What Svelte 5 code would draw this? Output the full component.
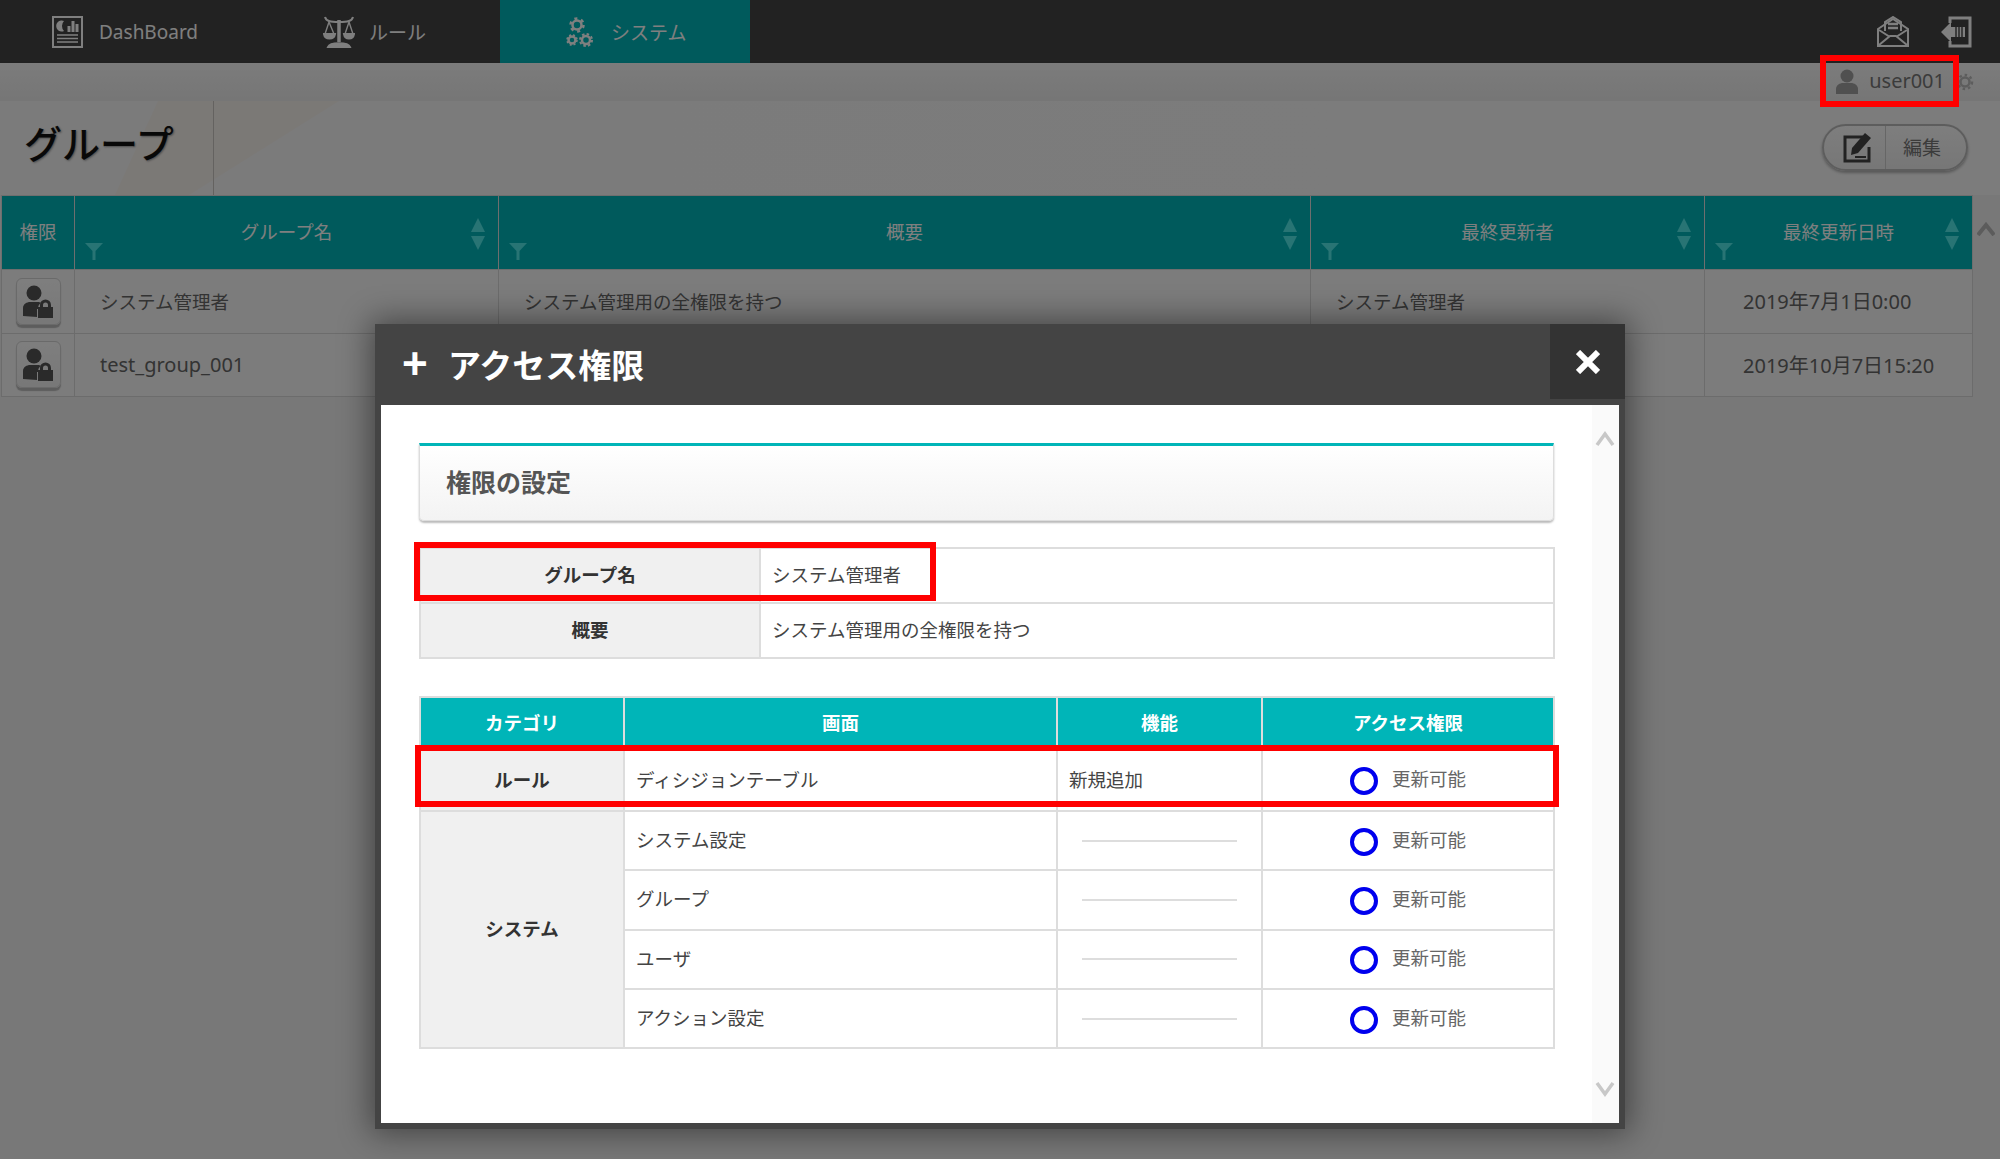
<script>
  const columns = [
    { name: "グループ名", width: 424 },
    { name: "概要", width: 812 },
    { name: "最終更新者", width: 394 },
    { name: "最終更新日時", width: 268 }
  ];

  const groups = [
    { name: "システム管理者", note: "システム管理用の全権限を持つ", user: "システム管理者", date: "2019年7月1日0:00" },
    { name: "test_group_001", note: "", user: "", date: "2019年10月7日15:20" }
  ];

  const screens = ["システム設定", "グループ", "ユーザ", "アクション設定"];
</script>

<div class="page">
  <nav class="topbar">
    <a class="tab" href="#dash">
      <svg width="31" height="32" viewBox="0 0 31 32" fill="none" stroke="currentColor" stroke-width="2">
        <rect x="1" y="1" width="29" height="30" />
        <path d="M12 5a5.5 5.5 0 1 0 0 10 7 7 0 0 1-2-5 7 7 0 0 1 2-5z" fill="currentColor" stroke="none" />
        <path d="M17 16v-6M21 16V5M25 16V8" stroke-width="3" />
        <path d="M5 19h21M5 22.5h21M5 26h21" stroke-width="1.6" />
      </svg>
      <span>DashBoard</span>
    </a>
    <a class="tab rule" href="#rule">
      <svg width="32" height="32" viewBox="0 0 32 32" fill="none" stroke="currentColor" stroke-width="2">
        <path d="M16 4v22" stroke-width="3.5" />
        <path d="M2 1c1 4 5 5 14 5s13-1 14-5" />
        <path d="M6 6 2 18h9zM26 6l-4 12h8z" stroke-width="1.4" />
        <path d="M1 18c1 6 10 6 11 0zM21 18c1 6 9 6 10 0z" fill="currentColor" />
        <path d="M5 31c2-5 20-5 22 0z" fill="currentColor" />
      </svg>
      <span>ルール</span>
    </a>
    <a class="tab active" href="#system">
      <svg width="28" height="30" viewBox="0 0 28 30" fill="none" stroke="currentColor">
        <circle cx="11" cy="8" r="4.5" stroke-width="2.5" />
        <circle cx="11" cy="8" r="6.5" stroke-width="2.5" stroke-dasharray="3 3.8" />
        <circle cx="6" cy="23" r="3.5" stroke-width="2.5" />
        <circle cx="6" cy="23" r="5" stroke-width="1.5" stroke-dasharray="2 2" />
        <circle cx="20" cy="23" r="4" stroke-width="2.5" />
        <circle cx="20" cy="23" r="6" stroke-width="2" stroke-dasharray="2.5 2.2" />
      </svg>
      <span>システム</span>
    </a>
    <div class="top-icons">
      <svg width="32" height="31" viewBox="0 0 32 31" fill="none" stroke="currentColor" stroke-width="2">
        <path d="M1 13 16 3l15 10v17H1z" />
        <path d="M2 29l11-9h6l11 9M2 14l11 7M30 14l-11 7" />
        <path d="M8 15V6l8-5 8 5v9" />
        <path d="M11 8h10M11 12h10" stroke-width="2.5" />
      </svg>
      <svg width="31" height="32" viewBox="0 0 31 32" fill="none" stroke="currentColor" stroke-width="3">
        <path d="M9 7V2h20v28H9v-5" />
        <path d="M0 16 10 6v5h14v10H10v5z" fill="currentColor" stroke="none" />
        <path d="M15 11v10M18 11v10M21 11v10" stroke="#444" stroke-width="1.4" />
      </svg>
    </div>
  </nav>

  <div class="subbar">
    <svg class="user-icon" width="22" height="25" viewBox="0 0 22 25" fill="#a0a0a0">
      <circle cx="11" cy="7" r="6.5" />
      <path d="M0 25v-5c0-4 4-6 7-6h8c3 0 7 2 7 6v5z" />
    </svg>
    <span class="username">user001</span>
    <svg width="18" height="20" viewBox="0 0 18 20" fill="none" stroke="#bbb">
      <circle cx="9" cy="10" r="4.5" stroke-width="2.5" />
      <circle cx="9" cy="10" r="7" stroke-width="2.5" stroke-dasharray="2.5 2.9" />
    </svg>
  </div>

  <header class="page-head">
    <h1>グループ</h1>
    <button class="edit-btn">
      <span class="edit-icon">
        <svg width="30" height="32" viewBox="0 0 30 32" fill="none" stroke="#444" stroke-width="3">
          <path d="M20 6H2v24h24V16" />
          <path d="M8 24 9 17 22 2l6 5-13 15z" fill="#444" stroke="none" />
          <path d="M12 26h11" stroke-width="2" />
        </svg>
      </span>
      <span class="edit-label">編集</span>
    </button>
  </header>

  <table class="groups">
    <colgroup>
      <col style="width: 73px" />
      {#each columns as col}
        <col style="width: {col.width}px" />
      {/each}
    </colgroup>
    <thead>
      <tr>
        <th>権限</th>
        {#each columns as col}
          <th>
            {col.name}
            <i class="sort up"></i>
            <i class="sort down"></i>
            <svg class="filter" width="18" height="17" viewBox="0 0 18 17" fill="#50e8e8"><path d="M0 0h18l-7.5 8v9h-3V8z" /></svg>
          </th>
        {/each}
      </tr>
    </thead>
    <tbody>
      {#each groups as g}
        <tr>
          <td class="icon-cell">
            <span class="lock-btn">
              <svg width="30" height="33" viewBox="0 0 30 33" fill="#555">
                <circle cx="11" cy="8" r="7.5" />
                <path d="M0 31v-8c0-4 4-6 7-6h8c1 0 2 0 3 1-2 1-3 3-3 6h-1v8z" />
                <path d="M17 22v-2a5.5 5.5 0 0 1 11 0v2h2v11H15V22zm3 0h5v-2a2.5 2.5 0 0 0-5 0z" />
              </svg>
            </span>
          </td>
          <td class="pad" class:latin={g.name.startsWith("test")}>{g.name}</td>
          <td class="pad">{g.note}</td>
          <td class="pad">{g.user}</td>
          <td class="date">{g.date}</td>
        </tr>
      {/each}
    </tbody>
  </table>

  <svg class="page-scroll" width="18" height="14" viewBox="0 0 18 14" fill="none" stroke="#b8b8b8" stroke-width="4"><path d="M1 13 9 3l8 10" /></svg>

  <div class="overlay"></div>

  <span class="mark mark-user"></span>

  <section class="modal">
    <div class="modal-head">
      <h2><b class="plus">+</b>アクセス権限</h2>
      <button class="close" aria-label="閉じる">
        <svg width="24" height="24" viewBox="0 0 24 24" stroke="#fff" stroke-width="6"><path d="M2 2l20 20M22 2 2 22" /></svg>
      </button>
    </div>
    <div class="modal-body">
      <div class="section-title">権限の設定</div>

      <table class="info">
        <colgroup><col style="width: 340px" /><col /></colgroup>
        <tbody>
          <tr><th>グループ名</th><td>システム管理者</td></tr>
          <tr><th>概要</th><td>システム管理用の全権限を持つ</td></tr>
        </tbody>
      </table>

      <table class="access">
        <colgroup>
          <col style="width: 204px" />
          <col style="width: 433px" />
          <col style="width: 205px" />
          <col />
        </colgroup>
        <thead>
          <tr><th>カテゴリ</th><th>画面</th><th>機能</th><th>アクセス権限</th></tr>
        </thead>
        <tbody>
          <tr class="first">
            <th>ルール</th>
            <td>ディシジョンテーブル</td>
            <td>新規追加</td>
            <td class="perm"><i class="ring"></i>更新可能</td>
          </tr>
          {#each screens as screen, i}
            <tr>
              {#if i === 0}
                <th rowspan="4">システム</th>
              {/if}
              <td>{screen}</td>
              <td><div class="none"></div></td>
              <td class="perm"><i class="ring"></i>更新可能</td>
            </tr>
          {/each}
        </tbody>
      </table>

      <span class="mark mark-group"></span>
      <span class="mark mark-rule"></span>

      <svg class="scroll top" width="20" height="16" viewBox="0 0 20 16" fill="none" stroke="#c8c8c8" stroke-width="3.5"><path d="M2 14 10 3l8 11" /></svg>
      <svg class="scroll bottom" width="20" height="16" viewBox="0 0 20 16" fill="none" stroke="#c8c8c8" stroke-width="3.5"><path d="M2 2l8 11 8-11" /></svg>
    </div>
  </section>
</div>

<style>
  :global(body) {
    margin: 0;
    font-family: "Noto Sans", "Noto Sans CJK JP", sans-serif;
  }

  .page {
    position: relative;
    width: 2000px;
    height: 1159px;
    overflow: hidden;
    background: #f0f0f0;
    color: #666;
    font-size: 18.5px;
  }

  .topbar {
    display: flex;
    height: 63px;
    background: #444;
    color: #fff;
  }

  .tab {
    display: flex;
    align-items: center;
    gap: 16px;
    width: 250px;
    padding-left: 52px;
    box-sizing: border-box;
    color: #fff;
    text-decoration: none;
    font-size: 19px;
  }

  .tab.rule {
    padding-left: 73px;
    gap: 14px;
  }

  .tab.active {
    background: #00b5b8;
    padding-left: 66px;
    gap: 17px;
  }

  .top-icons {
    margin-left: auto;
    display: flex;
    align-items: center;
    gap: 32px;
    padding-right: 28px;
  }

  .subbar {
    position: relative;
    display: flex;
    align-items: center;
    justify-content: flex-end;
    height: 38px;
    padding-right: 26px;
    background: linear-gradient(#f8f8f8, #ececec);
    box-shadow: 0 2px 4px rgba(0, 0, 0, 0.2);
  }

  .user-icon {
    margin-bottom: 2px;
  }

  .username {
    margin: 0 11px 4px 11px;
    font-size: 20px;
    color: #777;
  }

  .page-head {
    position: relative;
    display: flex;
    align-items: center;
    justify-content: space-between;
    height: 94px;
    padding: 0 32px 0 24px;
    box-sizing: border-box;
    background: linear-gradient(to right, #f6f6f6, #f9f9f9);
  }

  /* tan diagonal behind the title, closed off by the thin rule at 213px */
  .page-head::before {
    content: "";
    position: absolute;
    left: 0;
    top: 0;
    width: 340px;
    height: 94px;
    background: #f7f2ed;
    clip-path: polygon(158px 0, 339px 0, 189px 94px, 115px 94px);
  }

  .page-head::after {
    content: "";
    position: absolute;
    left: 213px;
    top: 0;
    width: 1px;
    height: 94px;
    background: #c8c4c0;
  }

  h1 {
    position: relative;
    margin: 0 0 14px;
    font-size: 38px;
    font-weight: 500;
    color: #111;
    text-shadow: 1px 1px 2px #999;
  }

  .edit-btn {
    display: flex;
    align-items: stretch;
    width: 146px;
    height: 47px;
    margin: 0 0 2px;
    padding: 0;
    border: 2px solid #bbb;
    border-radius: 24px;
    background: linear-gradient(#fcfcfc, #eee);
    box-shadow: 0 2px 3px rgba(0, 0, 0, 0.3);
    font: inherit;
    color: #777;
  }

  .edit-icon {
    display: flex;
    align-items: center;
    justify-content: center;
    width: 62px;
    padding-left: 6px;
    box-sizing: border-box;
    border-right: 1px solid #ccc;
  }

  .edit-label {
    align-self: center;
    margin-left: 17px;
    font-size: 19px;
  }

  table {
    border-collapse: collapse;
    table-layout: fixed;
  }

  th,
  td {
    box-sizing: border-box;
  }

  .groups {
    width: 1971px;
    margin-left: 1px;
  }

  .groups th {
    position: relative;
    height: 74px;
    padding: 0 0 4px;
    background: #00b5b8;
    border: 1px solid #ddd;
    color: #fff;
    font-weight: 400;
  }

  .sort {
    position: absolute;
    right: 13px;
    border-left: 7px solid transparent;
    border-right: 7px solid transparent;
  }

  .sort.up {
    top: 22px;
    border-bottom: 14px solid #50e8e8;
  }

  .sort.down {
    top: 40px;
    border-top: 14px solid #50e8e8;
  }

  .filter {
    position: absolute;
    left: 10px;
    bottom: 9px;
  }

  .groups td {
    height: 63.5px;
    padding: 0 0 1px;
    border: 1px solid #d8d8d8;
    background: #f8f8f8;
  }

  .groups td.pad {
    padding-left: 25px;
  }

  .groups td.latin {
    font-size: 20px;
  }

  .groups td.date {
    padding-left: 38px;
    font-size: 20px;
  }

  .groups td.icon-cell {
    padding: 0;
    text-align: center;
  }

  .lock-btn {
    display: inline-flex;
    align-items: center;
    justify-content: center;
    width: 45px;
    height: 47px;
    box-sizing: border-box;
    border: 1px solid #d4d4d4;
    border-radius: 6px;
    background: linear-gradient(#fdfdfd, #f0f0f0);
    box-shadow: 0 3px 1px #bbb;
    vertical-align: middle;
  }

  .page-scroll {
    position: absolute;
    left: 1977px;
    top: 222px;
  }

  .overlay {
    position: absolute;
    inset: 0;
    background: rgba(0, 0, 0, 0.5);
  }

  .mark {
    position: absolute;
    box-sizing: border-box;
    border: 6px solid #f00;
  }

  .mark-user {
    left: 1820px;
    top: 55px;
    width: 139px;
    height: 52px;
  }

  .modal {
    position: absolute;
    left: 375px;
    top: 324px;
    width: 1250px;
    height: 805px;
    padding: 0 6px 6px;
    box-sizing: border-box;
    background: #444;
    box-shadow: 0 0 30px 4px rgba(0, 0, 0, 0.45);
    color: #444;
  }

  .modal-head {
    display: flex;
    justify-content: space-between;
    align-items: flex-start;
    height: 81px;
    margin: 0 -6px;
  }

  h2 {
    display: flex;
    align-items: center;
    margin: 0;
    height: 80px;
    padding-left: 27px;
    color: #fff;
    font-size: 33px;
    font-weight: 700;
  }

  .plus {
    width: 46px;
    font-size: 44px;
    font-weight: 700;
    line-height: 1;
    font-family: "Liberation Sans", sans-serif;
  }

  .close {
    display: flex;
    align-items: center;
    justify-content: center;
    width: 75px;
    height: 75px;
    padding: 0;
    border: none;
    background: #333;
  }

  .modal-body {
    position: relative;
    height: 718px;
    padding: 38px 65px 0 38px;
    box-sizing: border-box;
    background: linear-gradient(to right, #fff 1211px, #fafafa 1211px);
  }

  .section-title {
    height: 78px;
    padding-left: 26px;
    box-sizing: border-box;
    border: 1px solid #ddd;
    border-top: 3px solid #00b5b8;
    border-radius: 0 0 5px 5px;
    background: linear-gradient(#fff, #f3f3f3);
    box-shadow: 0 2px 2px #bbb;
    line-height: 72px;
    font-size: 25px;
    font-weight: 700;
    color: #555;
  }

  .info {
    width: 1136px;
    margin-top: 26px;
  }

  .info th,
  .info td {
    height: 55px;
    padding: 0 0 3px;
    border: 2px solid #ddd;
  }

  .info th {
    background: #f0f0f0;
    font-weight: 700;
    color: #333;
  }

  .info td {
    padding-left: 11px;
    background: #fff;
  }

  .access {
    width: 1136px;
    margin-top: 37px;
  }

  .access th,
  .access td {
    height: 59.3px;
    padding: 0 11px 3px;
    border: 2px solid #ddd;
    background: #fff;
  }

  .access tbody th {
    padding: 0 0 3px;
    background: #f0f0f0;
    font-weight: 700;
    color: #333;
  }

  .access thead th {
    height: 52px;
    padding: 0 0 3px;
    background: #00b5b8;
    color: #fff;
    font-weight: 700;
  }

  .access .first th,
  .access .first td {
    height: 62px;
  }

  .none {
    height: 2px;
    margin: 3px 13px 0;
    background: #ddd;
  }

  .access td.perm {
    padding: 0 0 0 87px;
    color: #666;
  }

  .ring {
    display: inline-block;
    width: 28px;
    height: 28px;
    margin-right: 14px;
    box-sizing: border-box;
    border: 4.5px solid #00e;
    border-radius: 50%;
    vertical-align: middle;
  }

  .mark-group {
    left: 33px;
    top: 137px;
    width: 522px;
    height: 59px;
  }

  .mark-rule {
    left: 34px;
    top: 340px;
    width: 1144px;
    height: 62px;
  }

  .scroll {
    position: absolute;
    left: 1214px;
  }

  .scroll.top {
    top: 26px;
  }

  .scroll.bottom {
    top: 676px;
  }
</style>
